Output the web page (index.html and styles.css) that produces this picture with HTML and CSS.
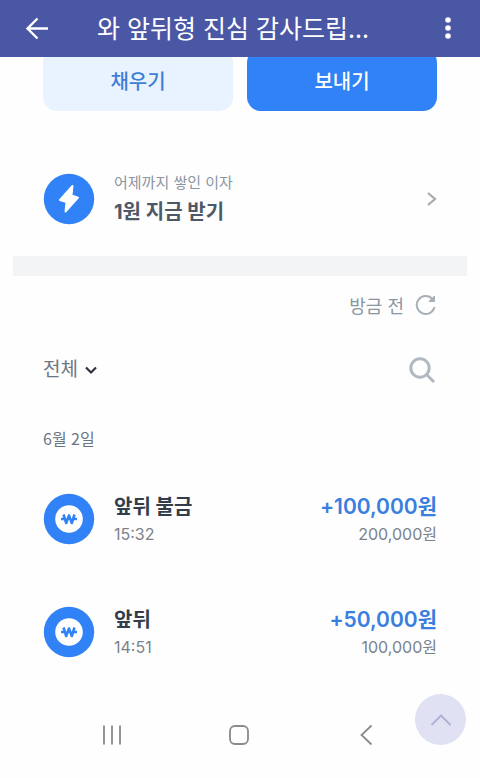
FILE: index.html
```html
<!DOCTYPE html>
<html lang="ko">
<head>
<meta charset="utf-8">
<meta name="viewport" content="width=device-width, initial-scale=1">
<title>와 앞뒤형 진심 감사드립...</title>
<link rel="stylesheet" href="styles.css">
</head>
<body>
<header class="topbar">
  <button class="icon-button" type="button" aria-label="뒤로">
    <svg width="24" height="24" viewBox="0 0 24 24" fill="none" stroke="currentColor" stroke-width="2.4"><path d="M23 11.500H3M12.500 1.500L2.500 11.500L12.500 21.500"/></svg>
  </button>
  <h1 class="topbar-title">와 앞뒤형 진심 감사드립...</h1>
  <button class="icon-button" type="button" aria-label="더보기">
    <svg width="24" height="24" viewBox="0 0 24 24" fill="currentColor"><circle cx="12" cy="3" r="2.800"/><circle cx="12" cy="11" r="2.800"/><circle cx="12" cy="19" r="2.800"/></svg>
  </button>
</header>
<main>
  <div class="actions">
    <button class="action action-light" type="button">채우기</button>
    <button class="action action-primary" type="button">보내기</button>
  </div>
  <a class="row interest" href="#interest">
    <svg class="badge" width="52" height="52" viewBox="0 0 52 52"><circle cx="26" cy="26" r="25.200" fill="#3182f6"/><path d="M29.500 13L17 27L23.500 29L22.500 38.500L35 24.700L28.500 22.500Z" fill="#fff" stroke="#fff" stroke-width="2" stroke-linejoin="round"/></svg>
    <span class="text">
      <span class="caption">어제까지 쌓인 이자</span>
      <span class="name interest-name">1원 지금 받기</span>
    </span>
    <svg class="chevron" width="12" height="16" viewBox="0 0 12 16" fill="none" stroke="#a5abb2" stroke-width="2.200"><path d="M3 2L10 8L3 14"/></svg>
  </a>
  <div class="divider"></div>
  <div class="refresh">
    <button class="plain refresh-button" type="button">방금 전
      <svg width="22" height="22" viewBox="0 0 22 22" fill="none" stroke="#a8afb6" stroke-width="2"><path d="M19.500 13A9 9 0 1 1 17.500 5"/><path d="M19.500 2V7.500H14Z" fill="#a8afb6" stroke-width="1"/></svg>
    </button>
  </div>
  <div class="filter">
    <button class="plain filter-button" type="button">전체
      <svg width="14" height="10" viewBox="0 0 14 10" fill="none" stroke="#30343d" stroke-width="2.200"><path d="M2 2.500L7 7.500L12 2.500"/></svg>
    </button>
    <button class="plain" type="button" aria-label="검색">
      <svg width="28" height="28" viewBox="0 0 28 28" fill="none" stroke="#b0b8c1" stroke-width="3"><circle cx="12" cy="12" r="9.200"/><path d="M18.500 18.500L26 26"/></svg>
    </button>
  </div>
  <h2 class="date">6월 2일</h2>
  <ul class="history">
    <li class="row">
      <svg class="badge" width="52" height="52" viewBox="0 0 52 52"><circle cx="26" cy="26" r="25.200" fill="#3182f6"/><circle cx="26" cy="26" r="13.800" fill="#fff"/><path d="M20.500 21.500L23.200 30L26 22.500L28.800 30L31.500 21.500M18 26H21.500M30.500 26H34" fill="none" stroke="#3182f6" stroke-width="2.600" stroke-linejoin="round"/></svg>
      <span class="text"><span class="name">앞뒤 불금</span><span class="detail">15:32</span></span>
      <span class="text money"><span class="name amount">+100,000원</span><span class="detail">200,000원</span></span>
    </li>
    <li class="row">
      <svg class="badge" width="52" height="52" viewBox="0 0 52 52"><circle cx="26" cy="26" r="25.200" fill="#3182f6"/><circle cx="26" cy="26" r="13.800" fill="#fff"/><path d="M20.500 21.500L23.200 30L26 22.500L28.800 30L31.500 21.500M18 26H21.500M30.500 26H34" fill="none" stroke="#3182f6" stroke-width="2.600" stroke-linejoin="round"/></svg>
      <span class="text"><span class="name">앞뒤</span><span class="detail">14:51</span></span>
      <span class="text money"><span class="name amount">+50,000원</span><span class="detail">100,000원</span></span>
    </li>
  </ul>
</main>
<nav class="system-nav">
  <button class="plain" type="button" aria-label="최근 앱"><svg width="22" height="22" viewBox="0 0 22 22" stroke="currentColor" stroke-width="1.800"><path d="M3 1.500V20.500M11 1.500V20.500M19 1.500V20.500"/></svg></button>
  <button class="plain" type="button" aria-label="홈"><svg width="22" height="22" viewBox="0 0 22 22" fill="none" stroke="currentColor" stroke-width="1.800"><rect x="2" y="2" width="18" height="18" rx="5"/></svg></button>
  <button class="plain" type="button" aria-label="뒤로"><svg width="22" height="22" viewBox="0 0 22 22" fill="none" stroke="currentColor" stroke-width="1.800"><path d="M16.500 1.500L6.500 11L16.500 20.500"/></svg></button>
</nav>
<button class="to-top" type="button" aria-label="맨 위로">
  <svg width="22" height="14" viewBox="0 0 22 14" fill="none" stroke="#abafd2" stroke-width="1.800"><path d="M1.500 12L11 2.500L20.500 12"/></svg>
</button>
</body>
</html>
```
FILE: styles.css
```css
* {
  box-sizing: border-box;
}

body {
  margin: 0;
  background: #fefefe;
  color: #333d4b;
  font-family: Inter, "Noto Sans CJK KR", sans-serif;
}

button {
  border: 0;
  padding: 0;
  background: none;
  color: inherit;
  font: inherit;
}

svg {
  display: block;
  flex: none;
}

.topbar {
  position: sticky;
  top: 0;
  z-index: 1;
  display: flex;
  align-items: center;
  height: 57px;
  padding: 0 16px 0 21px;
  background: #4a57a5;
  color: #fff;
}

.icon-button {
  padding: 0 4px;
}

.topbar-title {
  flex: 1;
  margin: 0;
  padding: 0 0 3px 44px;
  font: 400 25px/36px "Noto Sans CJK KR", sans-serif;
  white-space: nowrap;
}

.actions {
  display: flex;
  gap: 14px;
  margin-top: -8px;
  padding: 0 43px;
}

.action {
  flex: 1;
  height: 62px;
  border-radius: 14px;
  font-size: 20px;
  font-weight: 500;
}

.action-light {
  background: #e8f3ff;
  color: #3e7fd6;
}

.action-primary {
  background: #3182f6;
  color: #fff;
}

.row {
  display: flex;
  align-items: center;
  gap: 19px;
  padding: 0 43px;
  color: inherit;
  text-decoration: none;
}

.interest {
  margin: 60px 0 29px;
}

.text {
  display: flex;
  flex: 1;
  flex-direction: column;
}

.caption {
  color: #8b95a1;
  font-size: 15px;
  line-height: 24px;
}

.name {
  font-size: 20px;
  font-weight: 700;
  line-height: 30px;
}

.interest-name {
  padding-top: 2px;
  color: #4e5968;
}

.detail {
  color: #7b828b;
  font-size: 16px;
  line-height: 24px;
}

.money {
  align-items: flex-end;
}

.amount {
  color: #3a7fe0;
  font-size: 21px;
  font-weight: 600;
}

.divider {
  height: 20px;
  margin: 0 13px;
  background: #f2f4f6;
}

.plain {
  display: flex;
  align-items: center;
}

.refresh {
  display: flex;
  justify-content: flex-end;
  margin-top: 15px;
  padding: 0 43px;
}

.refresh-button {
  gap: 11px;
  color: #8b95a1;
  font-family: "Noto Sans CJK KR", sans-serif;
  font-size: 18px;
  line-height: 28px;
}

.filter {
  display: flex;
  align-items: center;
  justify-content: space-between;
  margin-top: 37px;
  padding: 0 44px 0 43px;
}

.filter-button {
  gap: 6px;
  color: #6b7684;
  font-size: 19px;
  line-height: 28px;
}

.date {
  margin: 42px 43px;
  color: #6b7684;
  font-family: "Noto Sans CJK KR", sans-serif;
  font-size: 16px;
  font-weight: 400;
  line-height: 24px;
}

.history {
  display: grid;
  gap: 59px;
  margin: 0;
  padding: 0;
  list-style: none;
}

.system-nav {
  display: flex;
  justify-content: space-between;
  padding: 65px 103px 32px 101px;
  color: #8a8a8a;
}

.to-top {
  position: fixed;
  right: 14px;
  bottom: 33px;
  display: grid;
  place-items: center;
  width: 51px;
  height: 51px;
  border-radius: 50%;
  background: #e0e2f4;
}
```
